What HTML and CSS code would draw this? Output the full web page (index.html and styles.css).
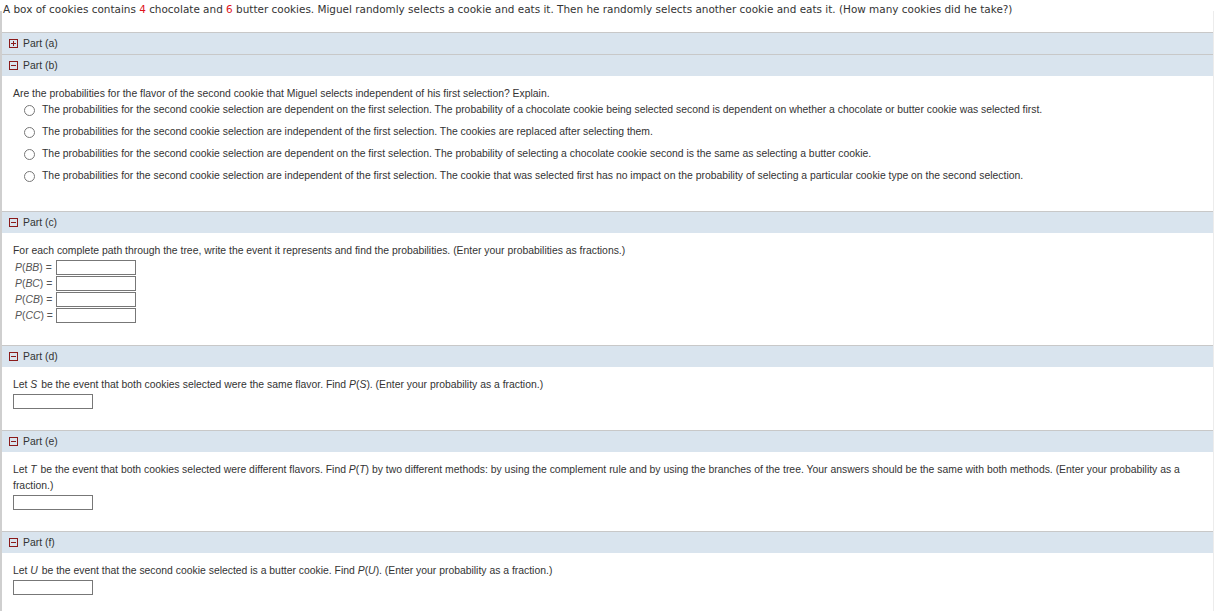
FILE: index.html
```html
<!DOCTYPE html>
<html>
<head>
<meta charset="utf-8">
<link rel="stylesheet" href="styles.css">
</head>
<body>
<div class="question">A box of cookies contains <span class="red">4</span> chocolate and <span class="red">6</span> butter cookies. Miguel randomly selects a cookie and eats it. Then he randomly selects another cookie and eats it. (How many cookies did he take?)</div>
<div class="sheet">
  <div class="part-head first"><span class="tog plus"></span>Part (a)</div>
  <div class="part-head"><span class="tog"></span>Part (b)</div>
  <div class="part-body pb-b">
    <div class="line">Are the probabilities for the flavor of the second cookie that Miguel selects independent of his first selection? Explain.</div>
    <div class="options">
      <div class="opt"><span class="radio"></span>The probabilities for the second cookie selection are dependent on the first selection. The probability of a chocolate cookie being selected second is dependent on whether a chocolate or butter cookie was selected first.</div>
      <div class="opt"><span class="radio"></span>The probabilities for the second cookie selection are independent of the first selection. The cookies are replaced after selecting them.</div>
      <div class="opt"><span class="radio"></span>The probabilities for the second cookie selection are dependent on the first selection. The probability of selecting a chocolate cookie second is the same as selecting a butter cookie.</div>
      <div class="opt"><span class="radio"></span>The probabilities for the second cookie selection are independent of the first selection. The cookie that was selected first has no impact on the probability of selecting a particular cookie type on the second selection.</div>
    </div>
  </div>
  <div class="part-head"><span class="tog"></span>Part (c)</div>
  <div class="part-body pb-c">
    <div class="line">For each complete path through the tree, write the event it represents and find the probabilities. (Enter your probabilities as fractions.)</div>
    <div class="prow"><span class="lbl"><i>P</i>(<i>BB</i>) =</span><span class="box"></span></div>
    <div class="prow"><span class="lbl"><i>P</i>(<i>BC</i>) =</span><span class="box"></span></div>
    <div class="prow"><span class="lbl"><i>P</i>(<i>CB</i>) =</span><span class="box"></span></div>
    <div class="prow"><span class="lbl"><i>P</i>(<i>CC</i>) =</span><span class="box"></span></div>
  </div>
  <div class="part-head"><span class="tog"></span>Part (d)</div>
  <div class="part-body pb-d">
    <div class="line">Let <i class="v">S</i> be the event that both cookies selected were the same flavor. Find <i>P</i>(<i>S</i>). (Enter your probability as a fraction.)</div>
    <span class="box"></span>
  </div>
  <div class="part-head"><span class="tog"></span>Part (e)</div>
  <div class="part-body pb-e">
    <div class="line">Let <i class="v">T</i> be the event that both cookies selected were different flavors. Find <i>P</i>(<i>T</i>) by two different methods: by using the complement rule and by using the branches of the tree. Your answers should be the same with both methods. (Enter your probability as a<br>fraction.)</div>
    <span class="box"></span>
  </div>
  <div class="part-head"><span class="tog"></span>Part (f)</div>
  <div class="part-body pb-f">
    <div class="line">Let <i class="v">U</i> be the event that the second cookie selected is a butter cookie. Find <i>P</i>(<i>U</i>). (Enter your probability as a fraction.)</div>
    <span class="box"></span>
  </div>
</div>
</body>
</html>
```
FILE: styles.css
```css
html, body {
  margin: 0;
  padding: 0;
  background: #fff;
}
body {
  width: 1214px;
  height: 611px;
  overflow: hidden;
  font-family: "Liberation Sans", Arial, sans-serif;
  color: #333;
}
.question {
  font-family: "DejaVu Sans", Verdana, sans-serif;
  font-size: 10.45px;
  line-height: 19px;
  padding-left: 3px;
  height: 11px;
  color: #333;
  white-space: nowrap;
}
.red { color: #e0131c; }
.sheet {
  border-left: 2px solid #cfcfcf;
  border-right: 1px solid #ececec;
  padding-top: 21px;
  width: 1211px;
}
.part-head {
  display: flex;
  align-items: center;
  height: 21px;
  border-top: 1px solid #c8c8c8;
  background: #d9e4ee;
  font-size: 10.4px;
  color: #333;
  padding-left: 7px;
}
.tog {
  width: 7px;
  height: 7px;
  border: 1px solid #8b1b1b;
  margin-right: 5px;
  position: relative;
}
.tog::before {
  content: "";
  position: absolute;
  left: 1px;
  top: 3px;
  width: 5px;
  height: 1px;
  background: #8b1b1b;
}
.tog.plus::after {
  content: "";
  position: absolute;
  left: 3px;
  top: 1px;
  width: 1px;
  height: 5px;
  background: #8b1b1b;
}
.part-body {
  padding: 10px 0 0 11px;
  font-size: 10.4px;
  color: #333;
}
.line {
  line-height: 16px;
  padding-right: 24px;
}
.line i.v {
  padding-right: 1px;
}
.options {
  display: flex;
  flex-direction: column;
  gap: 6px;
  padding-left: 11px;
}
.opt {
  display: flex;
  align-items: center;
  line-height: 16px;
}
.radio {
  width: 9px;
  height: 9px;
  border: 1px solid #777;
  border-radius: 50%;
  margin-right: 7px;
  background: #fff;
}
.pb-b { height: 125px; }
.pb-c { height: 102px; }
.pb-d { height: 53px; }
.pb-e { height: 69px; }
.pb-f { height: 70px; }
.prow {
  display: flex;
  align-items: center;
  height: 16px;
  margin-left: 2px;
}
.lbl {
  width: 41px;
  color: #555;
}
.box {
  display: block;
  width: 78px;
  height: 13px;
  border: 1px solid #777;
  background: #fff;
}
.pb-d .box, .pb-e .box, .pb-f .box {
  margin-top: 1px;
}
```
